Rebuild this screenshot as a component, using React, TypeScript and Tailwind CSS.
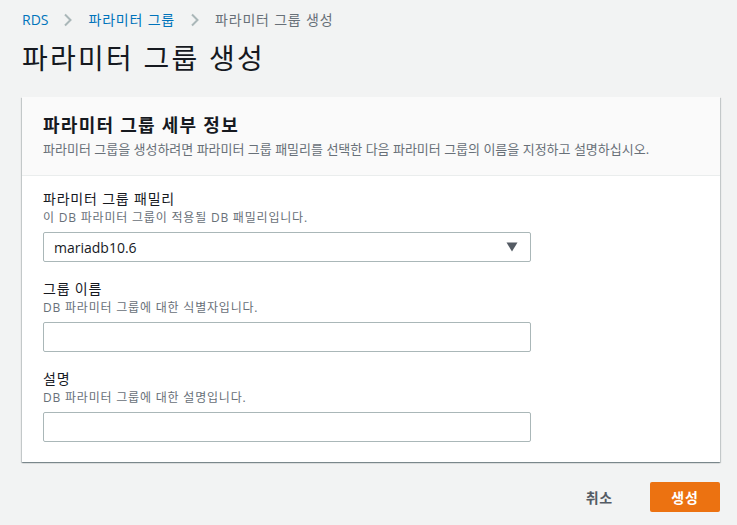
const font = "font-['Open_Sans','Noto_Sans_CJK_KR',sans-serif]";

function Chevron() {
  return (
    <svg width="12" height="14" viewBox="0 0 12 14" fill="none" className="mx-[14px]">
      <path d="M3 1.5l5.5 5.5L3 12.5" stroke="#aab7b8" strokeWidth="2" />
    </svg>
  );
}

function Field({
  label,
  hint,
  children,
}: {
  label: string;
  hint: string;
  children: React.ReactNode;
}) {
  return (
    <div className="flex flex-col">
      <div className="text-[14px] leading-[18px] text-[#16191f]">{label}</div>
      <div className="mt-[2px] text-[12px] leading-[16px] text-[#687078]">{hint}</div>
      <div className="mt-[6px]">{children}</div>
    </div>
  );
}

function TextBox() {
  return <div className="h-[30px] w-[488px] rounded-[2px] border border-[#aab7b8] bg-white" />;
}

export default function App() {
  return (
    <div
      className={`${font} h-[525px] w-[737px] overflow-hidden bg-[#f2f3f3] pl-[22px] pr-[17px] tracking-[0.05em]`}
    >
      <nav className="flex h-[20px] items-center pt-[20px] text-[14px] leading-[20px]">
        <span className="tracking-normal text-[#0073bb]">RDS</span>
        <Chevron />
        <span className="text-[#0073bb]">파라미터 그룹</span>
        <Chevron />
        <span className="text-[#687078]">파라미터 그룹 생성</span>
      </nav>

      <h1 className="mt-[20px] text-[28px] leading-[36px] font-normal tracking-[0.08em] text-[#16191f]">
        파라미터 그룹 생성
      </h1>

      <section className="mt-[21px] bg-white shadow-[0_1px_1px_0_rgba(0,28,36,0.3),1px_1px_1px_0_rgba(0,28,36,0.15),-1px_1px_1px_0_rgba(0,28,36,0.15)]">
        <header className="h-[79px] border-b border-[#eaeded] bg-[#fafafa] px-[21px] pt-[17px]">
          <h2 className="text-[18px] leading-[22px] font-bold tracking-[0.07em] text-[#16191f]">
            파라미터 그룹 세부 정보
          </h2>
          <p className="mt-[5px] text-[13px] leading-[17px] tracking-normal text-[#687078]">
            파라미터 그룹을 생성하려면 파라미터 그룹 패밀리를 선택한 다음 파라미터 그룹의 이름을 지정하고 설명하십시오.
          </p>
        </header>

        <div className="flex flex-col gap-[18px] px-[21px] pt-[14px] pb-[20px]">
          <Field label="파라미터 그룹 패밀리" hint="이 DB 파라미터 그룹이 적용될 DB 패밀리입니다.">
            <div className="flex h-[30px] w-[488px] items-center justify-between rounded-[2px] border border-[#aab7b8] bg-white pr-[12px] pl-[10px]">
              <span className="text-[14px] tracking-normal text-[#16191f]">mariadb10.6</span>
              <svg width="12" height="10" viewBox="0 0 12 10">
                <path d="M0.5 0.5h11L6 9.5z" fill="#545b64" />
              </svg>
            </div>
          </Field>
          <Field label="그룹 이름" hint="DB 파라미터 그룹에 대한 식별자입니다.">
            <TextBox />
          </Field>
          <Field label="설명" hint="DB 파라미터 그룹에 대한 설명입니다.">
            <TextBox />
          </Field>
        </div>
      </section>

      <div className="mt-[20px] flex items-center justify-end">
        <button className="mr-[37px] text-[14px] font-bold text-[#545b64]">취소</button>
        <button className="h-[30px] w-[70px] rounded-[2px] bg-[#ec7211] text-[14px] font-bold text-white">
          생성
        </button>
      </div>
    </div>
  );
}
